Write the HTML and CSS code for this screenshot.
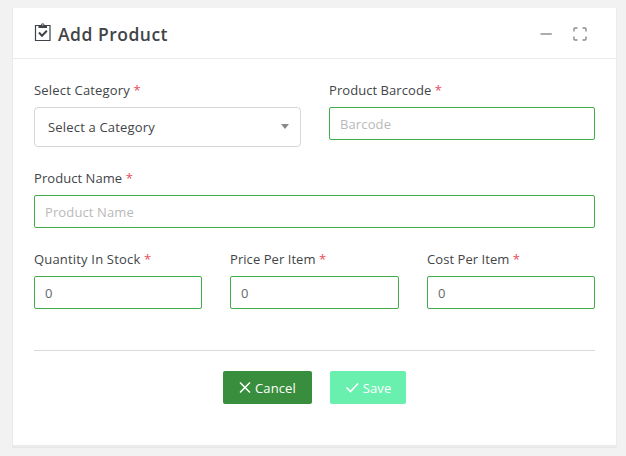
FILE: index.html
```html
<!DOCTYPE html>
<html lang="en">
<head>
<meta charset="utf-8">
<title>Add Product</title>
<link rel="stylesheet" href="styles.css">
</head>
<body>
<section class="card">
  <header class="card-header">
    <svg class="title-icon" width="18" height="19" viewBox="0 0 18 19" fill="none" stroke="#3f4347">
      <path d="M1.5 2.500h14.500v15H1.500z" stroke-width="1.200"/>
      <path d="M4.500 5V2h2.500Q7.200 .3 8.750 .3t1.750 1.700h2.500V5z" fill="#3f4347" stroke="none"/>
      <path d="M8.100 1.900h1.300" stroke="#fff"/>
      <path d="M5 9.500l3 3.300 4.800-5" stroke-width="2"/>
    </svg>
    <h1 class="title">Add Product</h1>
    <svg class="tool minimize" width="12" height="14" viewBox="0 0 12 14"><path d="M.5 7h11.300" stroke="#8b9298" stroke-width="1.500"/></svg>
    <svg class="tool" width="14" height="14" viewBox="0 0 14 14" fill="none" stroke="#858c93" stroke-width="1.400"><path d="M1 4.500V2q0-1 1-1h2.500M9.500 1H12q1 0 1 1v2.500M13 9.500V12q0 1-1 1H9.500M4.500 13H2q-1 0-1-1V9.500"/></svg>
  </header>
  <form class="card-body">
    <div class="row two">
      <div class="field">
        <label class="label loose">Select Category <span class="required">*</span></label>
        <div class="select loose"><span>Select a Category</span><i class="caret"></i></div>
      </div>
      <div class="field">
        <label class="label" for="barcode">Product Barcode <span class="required">*</span></label>
        <input class="input" id="barcode" type="text" placeholder="Barcode">
      </div>
    </div>
    <div class="row name-row">
      <div class="field">
        <label class="label" for="name">Product Name <span class="required">*</span></label>
        <input class="input" id="name" type="text" placeholder="Product Name">
      </div>
    </div>
    <div class="row three">
      <div class="field">
        <label class="label loose" for="stock">Quantity In Stock <span class="required">*</span></label>
        <input class="input" id="stock" type="text" value="0">
      </div>
      <div class="field">
        <label class="label" for="price">Price Per Item <span class="required">*</span></label>
        <input class="input" id="price" type="text" value="0">
      </div>
      <div class="field">
        <label class="label" for="cost">Cost Per Item <span class="required">*</span></label>
        <input class="input" id="cost" type="text" value="0">
      </div>
    </div>
    <div class="actions">
      <button class="button cancel" type="button"><svg width="12" height="12" viewBox="0 0 12 12" fill="none" stroke="#fff" stroke-width="1.500"><path d="M1 .5l10 10M11 .5L1 10.500"/></svg><span>Cancel</span></button>
      <button class="button save" type="button"><svg width="14" height="12" viewBox="0 0 14 12" fill="none" stroke="#fff" stroke-width="1.600"><path d="M1.500 5.500l4 4 7.500-8"/></svg><span>Save</span></button>
    </div>
  </form>
</section>
</body>
</html>
```
FILE: styles.css
```css
* { box-sizing: border-box; }
body {
  margin: 0;
  padding: 8px 10px 11px 13px;
  height: 456px;
  overflow: hidden;
  background: #f2f2f2;
  color: #424548;
  font-family: "Open Sans", "Noto Sans", sans-serif;
  font-size: 13px;
}
.card {
  height: 437px;
  background: #fff;
  box-shadow: 0 1px 0 1px #ebebeb, 0 2px 0 1px #e7e7e7;
}
.card-header {
  display: flex;
  align-items: center;
  height: 51px;
  padding: 0 29px 0 21px;
  border-bottom: 1px solid #eaeaea;
}
.title-icon { margin-top: -2px; }
.title {
  flex: 1;
  margin: 1px 0 0 6px;
  font-size: 17.5px;
  line-height: 24px;
  font-weight: 600;
  letter-spacing: .5px;
}
.tool { margin-top: 2px; }
.minimize { margin-right: 21px; }
.card-body { padding: 22px 21px 0; }
.row { display: grid; }
.two { grid-template-columns: 267px 266px; column-gap: 28px; height: 88px; }
.name-row { height: 81px; }
.three { grid-template-columns: 168px 169px 168px; column-gap: 28px; height: 100px; }
.label {
  display: block;
  height: 26px;
  line-height: 18px;
  letter-spacing: .06px;
  white-space: nowrap;
}
.loose { letter-spacing: .18px; }
.required { color: #e84c5b; }
.input {
  display: block;
  width: 100%;
  height: 33px;
  padding: 0 10px;
  border: 1px solid #42ad48;
  border-radius: 2px;
  outline: 0;
  background: #fff;
  color: #65686b;
  font: inherit;
}
.input::placeholder { color: #b9b9b9; letter-spacing: .12px; opacity: 1; }
.select {
  display: flex;
  align-items: center;
  justify-content: space-between;
  height: 40px;
  padding: 0 11px 0 13px;
  border: 1px solid #d6d6d6;
  border-radius: 4px;
}
.caret {
  margin-top: -1px;
  border: 4px solid transparent;
  border-top: 5px solid #888;
  border-bottom: 0;
}
.actions {
  display: flex;
  justify-content: center;
  gap: 18px;
  padding-top: 20px;
  border-top: 1px solid #d9d9d9;
}
.button {
  display: flex;
  align-items: center;
  justify-content: center;
  gap: 4px;
  height: 33px;
  padding: 0;
  border: 0;
  border-radius: 2px;
  color: #fff;
  font: inherit;
  letter-spacing: .12px;
}
.cancel { width: 89px; background: #388e3c; }
.save { width: 76px; background: #69f0ae; }
```
